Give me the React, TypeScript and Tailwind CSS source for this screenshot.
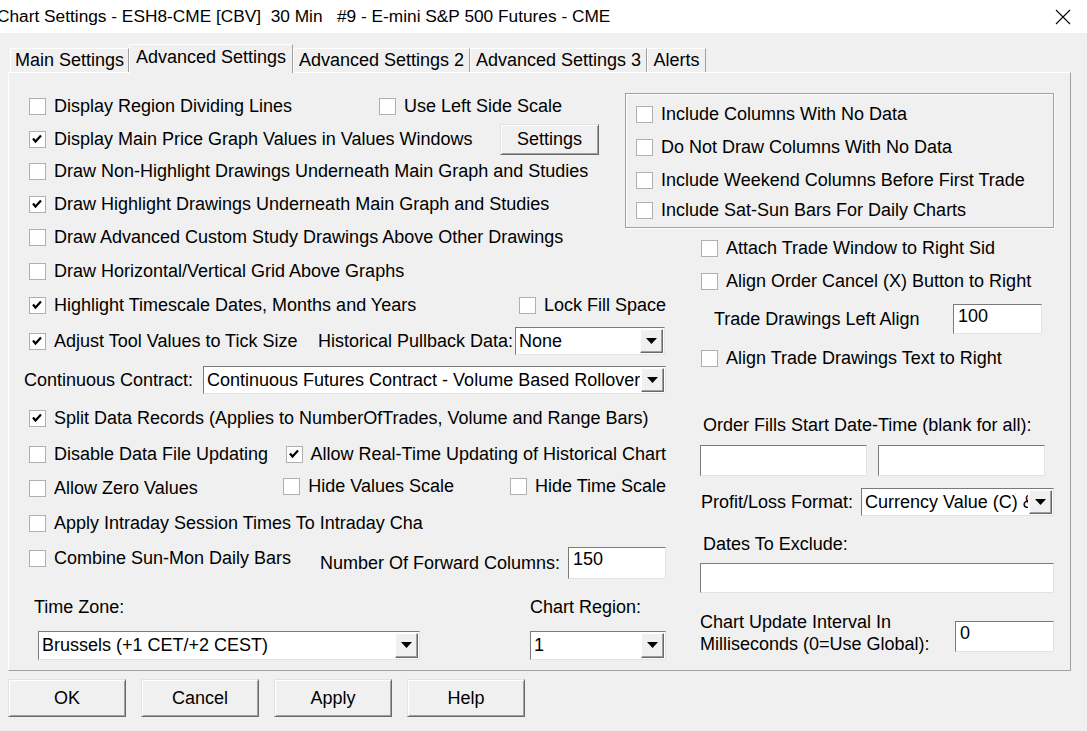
import { ReactNode } from 'react';

const font = { fontFamily: '"Liberation Sans", Arial, sans-serif' };

function CheckMark() {
  return (
    <svg width="15" height="15" viewBox="0 0 15 15" className="block">
      <path d="M3 6.5 L5.5 9.5 L11 3.5" fill="none" stroke="#000" strokeWidth="2.2" />
    </svg>
  );
}

function Check({ label, checked, className = '' }: { label: string; checked?: boolean; className?: string }) {
  return (
    <div className={`flex items-center shrink-0 ${className}`}>
      <div className="w-[17px] h-[17px] border border-[#b0b0b0] bg-white flex items-center justify-center shrink-0">
        {checked && <CheckMark />}
      </div>
      <span className="ml-[8px] whitespace-nowrap">{label}</span>
    </div>
  );
}

function Combo({ value, className = '' }: { value: string; className?: string }) {
  return (
    <div className={`flex shrink-0 bg-white border border-[#7a7a7a] border-r-[#e3e3e3] border-b-[#e3e3e3] ${className}`}>
      <div className="flex-1 overflow-hidden whitespace-nowrap pl-[3px] flex items-center">{value}</div>
      <div className="w-[23px] m-px bg-[#f0f0f0] border border-white border-r-[#696969] border-b-[#696969] shadow-[inset_-1px_-1px_0_#a0a0a0] flex items-center justify-center shrink-0">
        <svg width="11" height="6" viewBox="0 0 11 6">
          <path d="M0 0 H11 L5.5 6 Z" fill="#000" />
        </svg>
      </div>
    </div>
  );
}

function TextBox({ value = '', className = '' }: { value?: string; className?: string }) {
  return (
    <div className={`shrink-0 bg-white border border-[#7a7a7a] border-r-[#e3e3e3] border-b-[#e3e3e3] pl-[4px] leading-[22px] ${className}`}>
      {value}
    </div>
  );
}

function Button({ children, className = '' }: { children: ReactNode; className?: string }) {
  return (
    <div className={`shrink-0 flex items-center justify-center bg-[#f0f0f0] border border-[#e3e3e3] border-r-[#696969] border-b-[#696969] shadow-[inset_1px_1px_0_#fff,inset_-1px_-1px_0_#a0a0a0] ${className}`}>
      {children}
    </div>
  );
}

function Tab({ label, selected, className = '' }: { label: string; selected?: boolean; className?: string }) {
  return (
    <div
      className={`flex items-center justify-center shrink-0 bg-[#f0f0f0] border-t border-l border-white border-r border-r-[#a0a0a0] whitespace-nowrap ${
        selected ? 'h-[29px] relative z-10 pb-[3px]' : 'h-[24px] mt-[4px]'
      } ${className}`}
    >
      {label}
    </div>
  );
}

export default function App() {
  return (
    <div className="w-[1087px] h-[731px] overflow-hidden bg-[#f0f0f0] text-[18px] text-black" style={font}>
      <div className="h-[33px] bg-white flex items-center justify-between overflow-hidden">
        <span className="-ml-[3px] whitespace-pre text-[17.3px]">
          {'Chart Settings - ESH8-CME [CBV]  30 Min   #9 - E-mini S&P 500 Futures - CME'}
        </span>
        <svg width="16" height="16" viewBox="0 0 16 16" className="mr-[16px]">
          <path d="M1 1 L15 15 M15 1 L1 15" stroke="#000" strokeWidth="1.1" />
        </svg>
      </div>

      <div className="flex ml-[10px] mt-[11px] -mb-px">
        <Tab label="Main Settings" className="w-[119px]" />
        <Tab label="Advanced Settings" selected className="w-[164px]" />
        <Tab label="Advanced Settings 2" className="w-[177px]" />
        <Tab label="Advanced Settings 3" className="w-[177px]" />
        <Tab label="Alerts" className="w-[59px]" />
      </div>

      <div className="ml-[8px] w-[1063px] h-[599px] border border-white border-r-[#a0a0a0] border-b-[#a0a0a0] flex pl-[20px] pt-[17px]">
        <div className="w-[637px] shrink-0 flex flex-col">
          <div className="flex h-[33px] items-center">
            <div className="w-[350px]"><Check label="Display Region Dividing Lines" /></div>
            <Check label="Use Left Side Scale" />
          </div>
          <div className="flex h-[32px] items-center">
            <div className="w-[471px]"><Check checked label="Display Main Price Graph Values in Values Windows" /></div>
            <Button className="w-[99px] h-[31px]">Settings</Button>
          </div>
          <div className="flex h-[33px] items-center">
            <Check label="Draw Non-Highlight Drawings Underneath Main Graph and Studies" />
          </div>
          <div className="flex h-[33px] items-center">
            <Check checked label="Draw Highlight Drawings Underneath Main Graph and Studies" />
          </div>
          <div className="flex h-[33px] items-center">
            <Check label="Draw Advanced Custom Study Drawings Above Other Drawings" />
          </div>
          <div className="flex h-[34px] items-center">
            <Check label="Draw Horizontal/Vertical Grid Above Graphs" />
          </div>
          <div className="flex h-[34px] items-center">
            <div className="w-[490px]"><Check checked label="Highlight Timescale Dates, Months and Years" /></div>
            <Check label="Lock Fill Space" />
          </div>
          <div className="flex h-[38px] items-center">
            <div className="w-[289px]"><Check checked label="Adjust Tool Values to Tick Size" /></div>
            <div className="w-[197px] whitespace-nowrap">Historical Pullback Data:</div>
            <Combo value="None" className="w-[150px] h-[28px]" />
          </div>
          <div className="flex h-[40px] items-center -ml-[5px]">
            <div className="w-[179px] whitespace-nowrap">Continuous Contract:</div>
            <Combo value="Continuous Futures Contract - Volume Based Rollover" className="w-[463px] h-[28px]" />
          </div>
          <div className="flex h-[37px] items-center">
            <Check checked label="Split Data Records (Applies to NumberOfTrades, Volume and Range Bars)" />
          </div>
          <div className="flex h-[34px] items-center">
            <div className="w-[260px]"><Check label="Disable Data File Updating" /></div>
            <Check checked label="Allow Real-Time Updating of Historical Chart" />
          </div>
          <div className="flex h-[34px] items-center">
            <div className="w-[258px]"><Check label="Allow Zero Values" /></div>
            <div className="w-[230px]"><Check label="Hide Values Scale" className="mb-[4px]" /></div>
            <Check label="Hide Time Scale" className="mb-[4px]" />
          </div>
          <div className="flex h-[36px] items-center">
            <Check label="Apply Intraday Session Times To Intraday Cha" />
          </div>
          <div className="flex h-[44px] items-center">
            <div className="w-[291px]"><Check label="Combine Sun-Mon Daily Bars" className="mb-[10px]" /></div>
            <div className="w-[248px] whitespace-nowrap">Number Of Forward Columns:</div>
            <TextBox value="150" className="w-[98px] h-[32px]" />
          </div>
          <div className="flex h-[43px] items-end pb-[7px]">
            <div className="w-[501px] pl-[5px]">Time Zone:</div>
            <div>Chart Region:</div>
          </div>
          <div className="flex h-[34px] items-center">
            <div className="w-[501px] pl-[9px]">
              <Combo value="Brussels (+1 CET/+2 CEST)" className="w-[382px] h-[29px]" />
            </div>
            <Combo value="1" className="w-[136px] h-[29px]" />
          </div>
        </div>

        <div className="ml-[34px] w-[354px] shrink-0 flex flex-col">
          <div className="-ml-[75px] w-[429px] h-[135px] mt-[3px] border border-[#a0a0a0] shadow-[1px_1px_0_#fff,inset_1px_1px_0_#fff] pt-[4px] pl-[10px] flex flex-col">
            <div className="flex h-[33px] items-center"><Check label="Include Columns With No Data" /></div>
            <div className="flex h-[33px] items-center"><Check label="Do Not Draw Columns With No Data" /></div>
            <div className="flex h-[33px] items-center"><Check label="Include Weekend Columns Before First Trade" /></div>
            <div className="flex h-[26px] items-center"><Check label="Include Sat-Sun Bars For Daily Charts" /></div>
          </div>
          <div className="flex h-[32px] items-center mt-[4px] pl-[1px] overflow-hidden">
            <Check label="Attach Trade Window to Right Sid" />
          </div>
          <div className="flex h-[34px] items-center pl-[1px]">
            <Check label="Align Order Cancel (X) Button to Right" />
          </div>
          <div className="flex h-[42px] items-center pl-[14px]">
            <div className="w-[239px] whitespace-nowrap">Trade Drawings Left Align</div>
            <TextBox value="100" className="w-[89px] h-[30px]" />
          </div>
          <div className="flex h-[36px] items-center pl-[1px]">
            <Check label="Align Trade Drawings Text to Right" />
          </div>
          <div className="flex h-[30px] items-center mt-[34px] pl-[3px] whitespace-nowrap">
            Order Fills Start Date-Time (blank for all):
          </div>
          <div className="flex mt-[5px] gap-[11px]">
            <TextBox className="w-[167px] h-[31px]" />
            <TextBox className="w-[167px] h-[31px]" />
          </div>
          <div className="flex items-center mt-[12px] pl-[1px]">
            <div className="w-[162px] whitespace-nowrap">Profit/Loss Format:</div>
            <Combo value="Currency Value (C) & Ticks (T)" className="w-[193px] h-[28px]" />
          </div>
          <div className="flex h-[28px] items-center mt-[14px] pl-[3px]">Dates To Exclude:</div>
          <TextBox className="mt-[5px] w-[354px] h-[30px]" />
          <div className="flex mt-[15px]">
            <div className="w-[255px] leading-[22px] pt-[3px] whitespace-nowrap">
              Chart Update Interval In
              <br />
              Milliseconds (0=Use Global):
            </div>
            <TextBox value="0" className="mt-[13px] w-[99px] h-[31px]" />
          </div>
        </div>
      </div>

      <div className="flex ml-[8px] mt-[8px] gap-[15px]">
        <Button className="w-[118px] h-[38px]">OK</Button>
        <Button className="w-[118px] h-[38px]">Cancel</Button>
        <Button className="w-[118px] h-[38px]">Apply</Button>
        <Button className="w-[118px] h-[38px]">Help</Button>
      </div>
    </div>
  );
}
